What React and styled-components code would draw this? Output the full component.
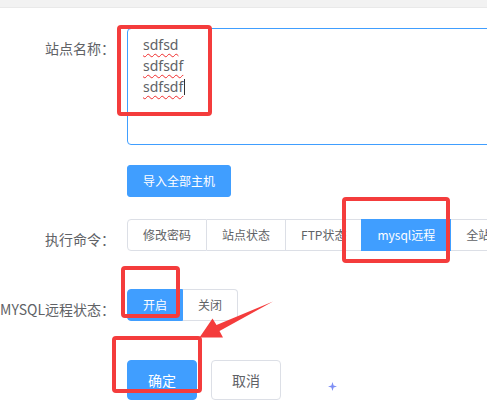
import React from "react";
import styled, { createGlobalStyle } from "styled-components";

const GlobalStyle = createGlobalStyle`
    html, body {
        margin: 0;
        padding: 0;
        overflow: hidden;
        background: #fff;
    }
    body {
        font-family: "Noto Sans CJK SC", "Noto Sans", sans-serif;
        color: #606266;
    }
`;

const commands = ["修改密码", "站点状态", "FTP状态", "mysql远程", "全站备份"];

const App = () => {
    return (
        <>
            <GlobalStyle />
            <Page>
                <TopBar />
                <Form>
                    <FormItem $gap={20}>
                        <Label>站点名称：</Label>
                        <TextArea>
                            <Line><Typo>sdfsd</Typo></Line>
                            <Line><Typo>sdfsdf</Typo></Line>
                            <Line><Typo>sdfsdf</Typo><Caret /></Line>
                        </TextArea>
                    </FormItem>
                    <FormItem $gap={22}>
                        <Label />
                        <SmallButton>导入全部主机</SmallButton>
                    </FormItem>
                    <FormItem $gap={30}>
                        <Label>执行命令：</Label>
                        <RadioGroup>
                            {commands.map((c) => (
                                <RadioButton key={c} $active={c === "mysql远程"}>
                                    {c}
                                </RadioButton>
                            ))}
                        </RadioGroup>
                    </FormItem>
                    <FormItem $gap={31}>
                        <Label>MYSQL远程状态：</Label>
                        <RadioGroup>
                            <RadioButton $active>开启</RadioButton>
                            <RadioButton>关闭</RadioButton>
                        </RadioGroup>
                    </FormItem>
                    <FormItem $gap={0}>
                        <Label />
                        <Actions>
                            <Button $primary>确定</Button>
                            <Button>取消</Button>
                        </Actions>
                    </FormItem>
                </Form>

                <Callout $x={117} $y={25} $w={95} $h={91} />
                <Callout $x={342} $y={197} $w={108} $h={66} />
                <Callout $x={121} $y={266} $w={59} $h={52} />
                <Callout $x={112} $y={336} $w={90} $h={57} />

                <Arrow width="487" height="408" viewBox="0 0 487 408">
                    <polygon
                        points="273,301.5 216.5,325 212.5,318.5 199.5,337.5 223,337.5 219.5,331"
                        fill="#f43c3c"
                    />
                </Arrow>

                <Sparkle width="9" height="9" viewBox="0 0 9 9">
                    <path d="M4.5 0 L5.6 3.4 L9 4.5 L5.6 5.6 L4.5 9 L3.4 5.6 L0 4.5 L3.4 3.4 Z" fill="#7d8ef5" />
                </Sparkle>
            </Page>
        </>
    );
};

export default App;

const Page = styled.div`
    position: relative;
    width: 487px;
    height: 408px;
    overflow: hidden;
`;
const TopBar = styled.div`
    height: 7px;
    background: #f2f2f2;
    border-bottom: 1px solid #e9e9e9;
`;
const Form = styled.div`
    padding-top: 20px;
`;
const FormItem = styled.div`
    display: flex;
    align-items: flex-start;
    margin-bottom: ${(p) => p.$gap}px;
`;
const Label = styled.div`
    flex: 0 0 115px;
    width: 115px;
    padding-right: 12px;
    display: flex;
    justify-content: flex-end;
    white-space: nowrap;
    font-size: 14px;
    line-height: 40px;
    color: #606266;
`;
const TextArea = styled.div`
    flex: 0 0 auto;
    width: 500px;
    height: 105px;
    padding: 5px 15px;
    border: 1px solid #409eff;
    border-radius: 4px;
    font-family: "Noto Sans", sans-serif;
    font-size: 14px;
    line-height: 21px;
    color: #606266;
`;
const Line = styled.div`
    white-space: nowrap;
`;
const Typo = styled.span`
    text-decoration: underline wavy #f02c2c;
    text-decoration-thickness: 1px;
    text-underline-offset: 3px;
`;
const Caret = styled.span`
    display: inline-block;
    width: 1px;
    height: 16px;
    margin-left: 1px;
    vertical-align: -3px;
    background: #303133;
`;
const SmallButton = styled.button`
    font-family: inherit;
    font-size: 12px;
    line-height: 1;
    padding: 9px 15px;
    border: 1px solid #409eff;
    border-radius: 3px;
    background: #409eff;
    color: #fff;
    white-space: nowrap;
`;
const RadioGroup = styled.div`
    display: flex;
    flex: 0 0 auto;
    white-space: nowrap;
`;
const RadioButton = styled.div`
    font-size: 12px;
    line-height: 12px;
    padding: 9px 15px;
    border: 1px solid ${(p) => (p.$active ? "#409eff" : "#dcdfe6")};
    border-left: 0;
    background: ${(p) => (p.$active ? "#409eff" : "#fff")};
    color: ${(p) => (p.$active ? "#fff" : "#606266")};
    box-shadow: ${(p) => (p.$active ? "-1px 0 0 0 #409eff" : "none")};
    &:first-child {
        border-left: 1px solid ${(p) => (p.$active ? "#409eff" : "#dcdfe6")};
        border-radius: 4px 0 0 4px;
        box-shadow: none;
    }
    &:last-child {
        border-radius: 0 4px 4px 0;
    }
`;
const Actions = styled.div`
    display: flex;
    gap: 14px;
`;
const Button = styled.button`
    font-family: inherit;
    font-size: 14px;
    line-height: 14px;
    padding: 12px 20px;
    border-radius: 4px;
    border: 1px solid ${(p) => (p.$primary ? "#409eff" : "#dcdfe6")};
    background: ${(p) => (p.$primary ? "#409eff" : "#fff")};
    color: ${(p) => (p.$primary ? "#fff" : "#606266")};
`;
const Callout = styled.div`
    position: absolute;
    left: ${(p) => p.$x}px;
    top: ${(p) => p.$y}px;
    width: ${(p) => p.$w}px;
    height: ${(p) => p.$h}px;
    box-sizing: border-box;
    border: 4px solid #f43c3c;
    border-radius: 4px;
    pointer-events: none;
`;
const Arrow = styled.svg`
    position: absolute;
    left: 0;
    top: 0;
    pointer-events: none;
`;
const Sparkle = styled.svg`
    position: absolute;
    left: 328px;
    top: 382px;
`;
